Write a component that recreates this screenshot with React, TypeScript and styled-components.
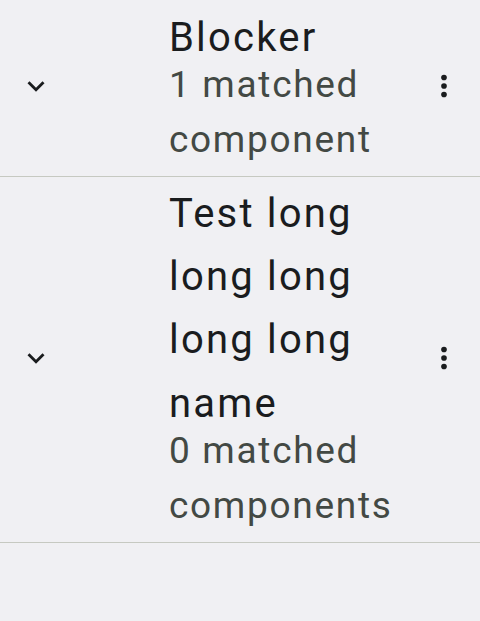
import React from "react";
import styled, { createGlobalStyle } from "styled-components";

const Global = createGlobalStyle`
  html, body { margin: 0; padding: 0; background: #f0f0f3; }
  body { font-family: Roboto, "Noto Sans", sans-serif; -webkit-font-smoothing: antialiased; }
`;

const List = styled.div`
  display: flex;
  flex-direction: column;
  width: 480px;
  background: #f0f0f3;
`;

const Row = styled.div`
  display: flex;
  align-items: center;
  padding: 5.5px 2px 8.3px 0;
  border-bottom: 1px solid #c6c9c1;
`;

const Leading = styled.div`
  width: 72px;
  display: flex;
  align-items: center;
  justify-content: center;
  flex: none;
`;

const Content = styled.div`
  flex: 1;
  min-width: 0;
  margin-left: 97px;
  display: flex;
  flex-direction: column;
  max-width: 240px;
`;

const Title = styled.div`
  font-size: 40px;
  line-height: 63.2px;
  letter-spacing: 2.2px;
  color: #1a1c1e;
`;

const Supporting = styled.div`
  font-size: 37px;
  line-height: 55px;
  letter-spacing: 1.7px;
  color: #434944;
  margin-top: -11.5px;
`;

const Trailing = styled.div`
  width: 68px;
  margin-left: auto;
  display: flex;
  align-items: center;
  justify-content: center;
  flex: none;
`;

const Icon = styled.svg`
  width: 34px;
  height: 34px;
  display: block;
  fill: #1a1c1e;
`;

const Chevron = () => (
  <Icon viewBox="0 0 24 24">
    <path d="M16.59 8.59L12 13.17 7.41 8.59 6 10l6 6 6-6z" />
  </Icon>
);

const MoreVert = () => (
  <Icon viewBox="0 0 24 24">
    <circle cx="12" cy="6" r="2" />
    <circle cx="12" cy="12" r="2" />
    <circle cx="12" cy="18" r="2" />
  </Icon>
);

const items = [
  { title: "Blocker", sub: "1 matched component" },
  { title: "Test long long long long long name", sub: "0 matched components" },
];

export default function App() {
  return (
    <>
      <Global />
      <List>
        {items.map((it) => (
          <Row key={it.title}>
            <Leading>
              <Chevron />
            </Leading>
            <Content>
              <Title>{it.title}</Title>
              <Supporting>{it.sub}</Supporting>
            </Content>
            <Trailing>
              <MoreVert />
            </Trailing>
          </Row>
        ))}
      </List>
    </>
  );
}
